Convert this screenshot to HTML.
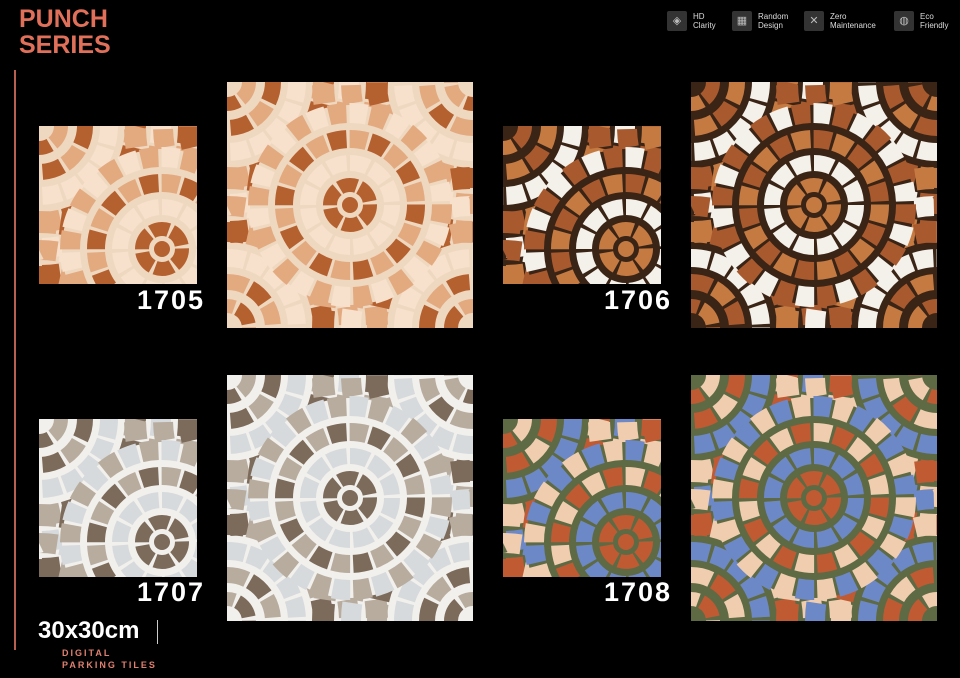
<!DOCTYPE html>
<html><head><meta charset="utf-8">
<style>
html,body{margin:0;padding:0;background:#000;}
body{width:960px;height:678px;position:relative;overflow:hidden;font-family:"Liberation Sans",sans-serif;}
.title{position:absolute;left:19px;top:6px;color:#e0705a;font-weight:bold;font-size:25px;line-height:26px;}
.vline{position:absolute;left:14px;top:70px;width:2px;height:580px;background:#b86050;}
.feat{position:absolute;top:11px;display:flex;align-items:center;color:#ddd;font-size:8px;line-height:9px;}
.feat .ic{width:20px;height:20px;background:#333;border-radius:2px;margin-right:6px;display:flex;align-items:center;justify-content:center;color:#bbb;font-size:11px;}
.t{position:absolute;display:block;}
.lbl{position:absolute;color:#fff;font-weight:bold;font-size:27px;line-height:30px;letter-spacing:2px;}
.size{position:absolute;left:38px;top:617px;color:#fff;font-weight:bold;font-size:24px;line-height:28px;}
.sbar{position:absolute;left:157px;top:620px;width:1px;height:24px;background:#ccc;}
.sub{position:absolute;left:62px;top:647px;color:#e08070;font-weight:bold;font-size:9px;line-height:12px;letter-spacing:2px;}
</style></head><body>
<div class="title">PUNCH<br>SERIES</div>
<div class="vline"></div>
<div class="feat" style="left:667px"><div class="ic">◈</div>HD<br>Clarity</div>
<div class="feat" style="left:732px"><div class="ic">▦</div>Random<br>Design</div>
<div class="feat" style="left:804px"><div class="ic">✕</div>Zero<br>Maintenance</div>
<div class="feat" style="left:894px"><div class="ic">◍</div>Eco<br>Friendly</div>

<svg class="t" style="left:39px;top:126px" width="158" height="158" data-p="0" data-s="1"></svg>
<svg class="t" style="left:227px;top:82px" width="246" height="246" data-p="0"></svg>
<svg class="t" style="left:503px;top:126px" width="158" height="158" data-p="1" data-s="1"></svg>
<svg class="t" style="left:691px;top:82px" width="246" height="246" data-p="1"></svg>
<svg class="t" style="left:39px;top:419px" width="158" height="158" data-p="2" data-s="1"></svg>
<svg class="t" style="left:227px;top:375px" width="246" height="246" data-p="2"></svg>
<svg class="t" style="left:503px;top:419px" width="158" height="158" data-p="3" data-s="1"></svg>
<svg class="t" style="left:691px;top:375px" width="246" height="246" data-p="3"></svg>

<div class="lbl" style="left:137px;top:285px">1705</div>
<div class="lbl" style="left:604px;top:285px">1706</div>
<div class="lbl" style="left:137px;top:577px">1707</div>
<div class="lbl" style="left:604px;top:577px">1708</div>

<div class="size">30x30cm</div>
<div class="sbar"></div>
<div class="sub">DIGITAL<br>PARKING TILES</div>

<script>
var P=[
 {g:"#efd8c0",a:"#b5602f",b:"#e3aa80",c:"#f7e0cc"},
 {g:"#3a2416",a:"#c57a42",b:"#a85a2e",c:"#f4f0ea"},
 {g:"#f2f0ec",a:"#7c6a5a",b:"#b8ac9e",c:"#d6dadc"},
 {g:"#5e6a44",a:"#bf5a33",b:"#efcdae",c:"#6d88c6"}
];
function ring(cx,cy,r,w,n,c1,c2){
 var s='';
 s+='<circle cx="'+cx+'" cy="'+cy+'" r="'+r+'" fill="none" stroke="'+c1+'" stroke-width="'+w+'" pathLength="'+(n*10)+'" stroke-dasharray="8.5 11.5"/>';
 s+='<circle cx="'+cx+'" cy="'+cy+'" r="'+r+'" fill="none" stroke="'+c2+'" stroke-width="'+w+'" pathLength="'+(n*10)+'" stroke-dasharray="8.5 11.5" stroke-dashoffset="10"/>';
 return s;
}
document.querySelectorAll('svg.t').forEach(function(el){
 var p=P[+el.dataset.p];var s='';
 s+='<rect width="246" height="246" fill="'+p.g+'"/>';
 var C=[[0,0],[246,0],[0,246],[246,246]];
 C.forEach(function(c){
  s+=ring(c[0],c[1],150,22,44,p.a,p.b);
  s+=ring(c[0],c[1],122,20,36,p.c,p.b);
  s+=ring(c[0],c[1],96,20,28,p.b,p.a);
  s+=ring(c[0],c[1],70,18,20,p.c,p.c);
  s+=ring(c[0],c[1],46,16,12,p.a,p.b);
  s+=ring(c[0],c[1],22,14,6,p.b,p.a);
 });
 s+='<circle cx="123" cy="123" r="100" fill="'+p.g+'"/>';
 s+=ring(123,123,92,20,28,p.b,p.c);
 s+=ring(123,123,66,18,20,p.a,p.b);
 s+=ring(123,123,42,16,12,p.c,p.c);
 s+=ring(123,123,20,14,6,p.a,p.a);
 s+='<circle cx="123" cy="123" r="8" fill="'+p.a+'"/>';
 el.setAttribute('viewBox', el.dataset.s?'0 0 158 158':'0 0 246 246');
 el.innerHTML=s;
});
</script>
</body></html>
